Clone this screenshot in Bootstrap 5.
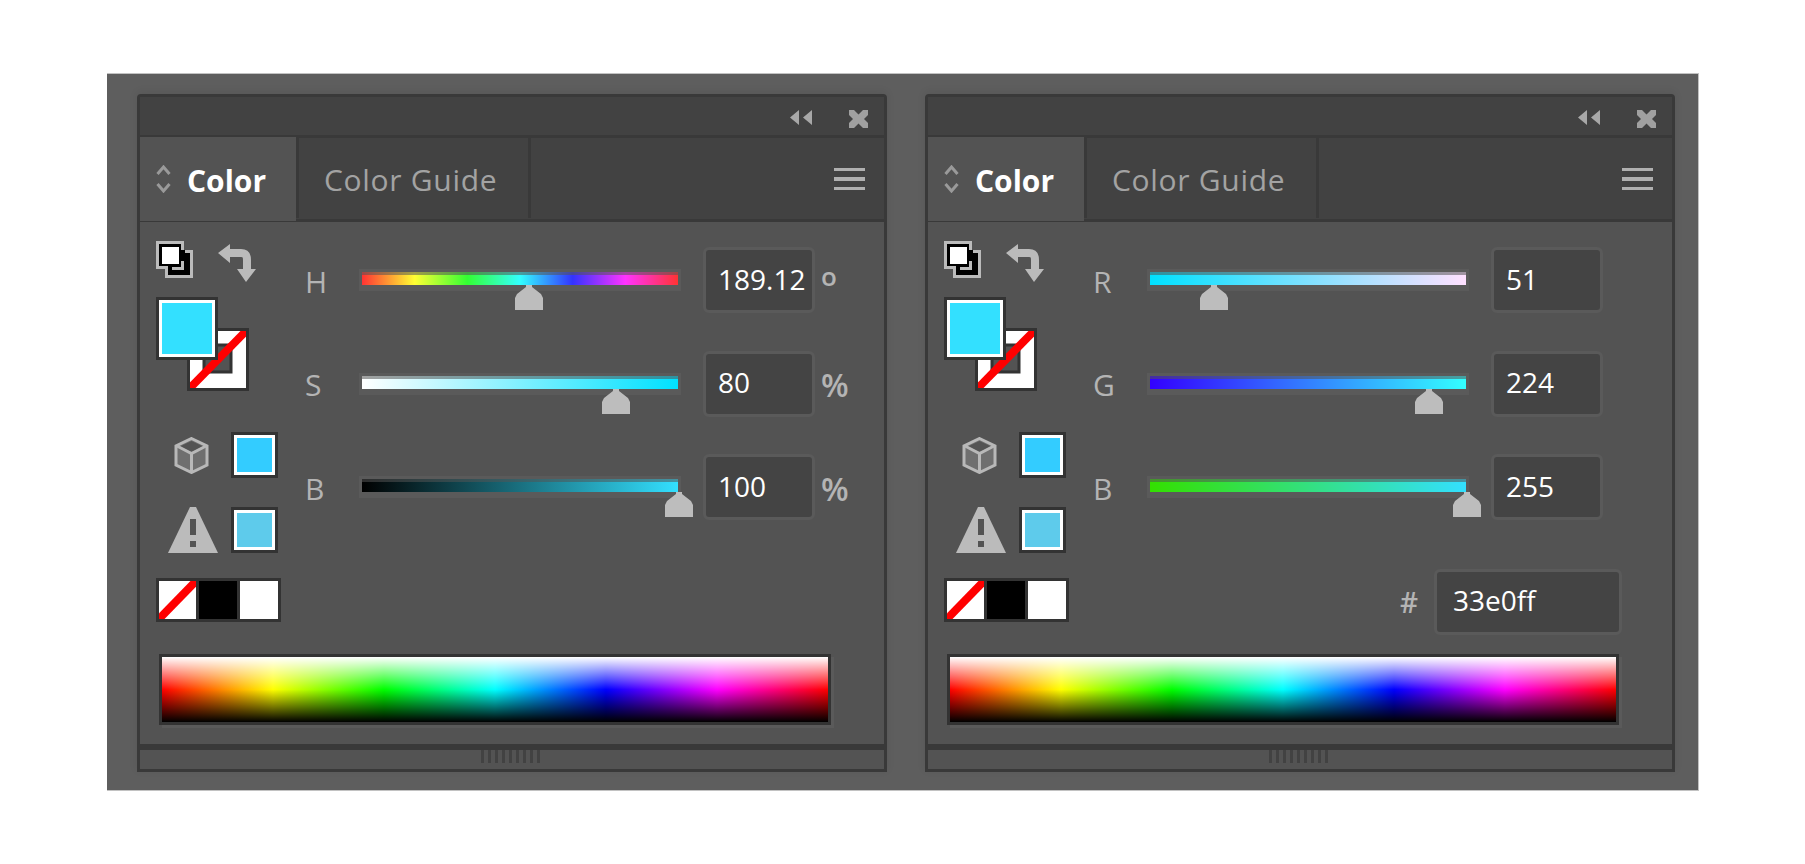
<!DOCTYPE html>
<html lang="en">
<head>
    <meta charset="UTF-8">
    <meta name="viewport" content="width=device-width, initial-scale=1.0">
    <title>Color panels</title>
    <link href="https://cdn.jsdelivr.net/npm/bootstrap@5.3.0/dist/css/bootstrap.min.css" rel="stylesheet">
    <style>
        body { background: #fff; font-family: "Open Sans", "Liberation Sans", sans-serif; }

        .frame-box {
            width: 1592px; height: 718px; margin: 73px 0 0 107px; padding: 20px 0 0 30px; gap: 38px;
            background: #5e5e5e; border: 1px solid #c2c2c2; border-left: 0;
        }
        .panel-box {
            width: 750px; height: 678px; background: #535353;
            border: 3px solid #393939; border-radius: 4px 4px 0 0;
            box-shadow: 0 -2px 8px rgba(0, 0, 0, .08);
        }

        .title-bar { height: 41px; background: #424242; border-bottom: 3px solid #393939; padding: 13px 16px 0 0; }
        .collapse-ico { margin-right: 37px; }

        .tab-bar { height: 84px; background: #424242; border-bottom: 3px solid #393939; }
        .tab-active {
            width: 156px; height: 84px; background: #535353; padding: 0 0 0 16px; gap: 16px;
            font-size: 30px; font-weight: 700; color: #fff;
        }
        .tab-active span, .tab-other span { position: relative; top: 2px; }
        .tab-other {
            width: 235px; height: 81px; padding-left: 25px; border-left: 3px solid #393939; border-right: 3px solid #393939;
            font-size: 30px; font-weight: 500; letter-spacing: .7px; color: #a3a3a3;
        }
        .menu-ico { margin-right: 19px; }

        .panel-main { height: 522px; }
        .panel-top { height: 432px; }
        .tools-col { width: 163px; padding-left: 16px; padding-top: 19px; }
        .swap-row { height: 41px; gap: 25px; }
        .swap-ico { margin-top: 3px; }
        .swatch-pair { width: 93px; height: 94px; margin-top: 15px; }
        .fill-swatch {
            width: 62px; height: 63px; top: 0; left: 0; background: #33e0ff;
            border: 3px solid #333; box-shadow: inset 0 0 0 3px #fff;
        }
        .stroke-swatch { top: 31px; left: 31px; }
        .gamut-row { width: 122px; margin-top: 41px; gap: 22px; }
        .warn-row { width: 122px; margin-top: 29px; gap: 13px; }
        .mini-swatch { width: 47px; height: 46px; border: 3px solid #333; box-shadow: inset 0 0 0 3px #fff; }
        .mini-web { background: #33ccff; }
        .mini-warn { background: #5ecbeb; }

        .quick-bar { width: 125px; height: 44px; margin-top: 25px; padding: 3px; gap: 3px; background: #333; }
        .quick-none { width: 37px; }
        .quick-black { width: 38px; background: #000; }
        .quick-white { width: 38px; background: #fff; }

        .slider-col { padding-top: 25px; gap: 37.5px; }
        .slider-row { height: 66px; }
        .slider-label { width: 56px; padding: 3px 0 0 2px; font-size: 30px; font-weight: 500; color: #b4b4b4; line-height: 1; }
        .slider-track {
            width: 322px; height: 22px; border-style: solid; border-color: #5a5a5a; border-width: 3px 3px 6px;
            box-shadow: inset 0 3px 0 rgba(83, 83, 83, .55);
        }
        .slider-thumb { width: 28px; height: 25px; top: 100%; margin-left: -13px; }
        .value-box.form-control {
            width: 112px; height: 66px; margin-left: 22px; padding: 0 0 3px 12px;
            background: #444; border: 3px solid #5a5a5a; border-radius: 6px;
            color: #fff; font: 28px "Open Sans", "Liberation Sans", sans-serif; box-shadow: none;
        }
        .unit-text { width: 34px; margin-left: 6px; padding-top: 3px; font-size: 32px; font-weight: 600; line-height: 1; color: #b4b4b4; }
        .unit-deg { font-size: 26px; padding-top: 0; margin-top: -8px; }
        .hex-row { height: 66px; margin-top: 11px; padding-left: 309px; }
        .hex-mark { width: 34px; font-size: 28px; font-weight: 600; color: #b4b4b4; }
        .value-box.hex-box { width: 188px; margin-left: 0; padding-left: 16px; }

        .spectrum-box {
            width: 672px; height: 71px; margin-left: 19px; border: 3px solid #333;
            box-shadow: 3px 3px 0 #5a5a5a;
            background:
                linear-gradient(to bottom, #fff 0%, rgba(255, 255, 255, 0) 50%, rgba(0, 0, 0, 0) 50%, #000 100%),
                linear-gradient(to right, #f00, #ff0, #0f0, #0ff, #00f, #f0f, #f00);
        }
        .panel-foot { height: 22px; background: #535353; border-top: 6px solid #393939; }
        .grip-ico { margin-left: 341px; }
    </style>
</head>
<body>
<div class="frame-box d-flex align-items-start" id="frame"></div>

<script>
    const panels = [
        {
            sliders: [
                { label: 'H', value: '189.12', pct: 189.12 / 360, unit: 'o', grad: '#ff3333, #ffff33, #33ff33, #33ffff, #3333ff, #ff33ff, #ff3333' },
                { label: 'S', value: '80', pct: 0.8, unit: '%', grad: '#ffffff, #00e1ff' },
                { label: 'B', value: '100', pct: 1, unit: '%', grad: '#000000, #33e0ff' }
            ]
        },
        {
            hex: '33e0ff',
            sliders: [
                { label: 'R', value: '51', pct: 51 / 255, grad: '#00e0ff, #ffe0ff' },
                { label: 'G', value: '224', pct: 224 / 255, grad: '#3300ff, #33ffff' },
                { label: 'B', value: '255', pct: 1, grad: '#33e000, #33e0ff' }
            ]
        }
    ];

    const thumbSvg = `<svg width="28" height="25" viewBox="0 0 28 25" class="d-block"><path d="M11 0h6v2l9 7 2 4v12H0V13l2-4 9-7z" fill="#bdbdbd"/></svg>`;

    const topIcons = `
        <svg class="collapse-ico" width="22" height="15" viewBox="0 0 22 15"><path d="M0 7.5 9 0v15zM13 7.5 22 0v15z" fill="#a8a8a8"/></svg>
        <svg width="19" height="18" viewBox="0 0 19 18"><path d="M0 0h5l4.500 4.500L14 0h5v5l-4 4 4 4v5h-5l-4.500-4.500L5 18H0v-5l4-4-4-4z" fill="#a0a0a0"/></svg>`;

    const arrowsIcon = `<svg width="15" height="28" viewBox="0 0 15 28"><path d="M1.500 9 7.500 2l6 7M1.500 19l6 7 6-7" fill="none" stroke="#9a9a9a" stroke-width="3"/></svg>`;

    const menuIcon = `<svg class="menu-ico" width="31" height="22" viewBox="0 0 31 22" shape-rendering="crispEdges"><path d="M0 0h31v3H0zM0 9h31v4H0zM0 19h31v3H0z" fill="#b0b0b0"/></svg>`;

    const defaultIcon = `<svg width="37" height="37" viewBox="0 0 37 37" shape-rendering="crispEdges">
        <rect width="28" height="28" fill="#bbb"/><rect x="3" y="3" width="22" height="22" fill="#000"/>
        <rect x="9" y="9" width="28" height="28" fill="#bbb"/><rect x="12" y="12" width="22" height="22" fill="#000"/>
        <rect x="3" y="3" width="22" height="22" fill="#000"/><rect x="25" y="9" width="4" height="12" fill="#000"/>
        <rect x="6" y="6" width="17" height="17" fill="#fff"/><path d="M25 20h3v9H16v-3h9z" fill="#bbb"/></svg>`;

    const swapIcon = `<svg class="swap-ico" width="38" height="38" viewBox="0 0 38 38">
        <path d="M8 9h15q6 0 6 7v11" fill="none" stroke="#bbb" stroke-width="8"/>
        <path d="M0 9 12 0v19zM19 25h19L28 38z" fill="#bbb"/></svg>`;

    const strokeSwatch = `<svg class="stroke-swatch position-absolute" width="62" height="63" viewBox="0 0 62 63">
        <rect width="62" height="63" fill="#fff"/>
        <rect x="17" y="17" width="27" height="27" fill="#535353" stroke="#333" stroke-width="3"/>
        <path d="M3 60 59 3" stroke="#f00" stroke-width="8"/>
        <rect x="1.500" y="1.500" width="59" height="60" fill="none" stroke="#333" stroke-width="3"/></svg>`;

    const cubeIcon = `<svg width="35" height="37" viewBox="0 0 35 37">
        <path d="M17.500 1.500 33 9v19l-15.500 7.500L2 28V9z" fill="#6f6f6f" stroke="#b8b8b8" stroke-width="3"/>
        <path d="M17.500 4 29 9.500 17.500 15 6 9.500z" fill="#535353"/>
        <path d="M3 9l14.500 7.500L32 9M17.500 16.500V35" fill="none" stroke="#b8b8b8" stroke-width="3"/></svg>`;

    const warnIcon = `<svg width="50" height="46" viewBox="0 0 50 46">
        <path d="M22 0h6l22 46H0z" fill="#bbb"/>
        <path d="M22 12h6v16h-6zM22 34h6v6h-6z" fill="#535353"/></svg>`;

    const noneSlash = `<svg class="quick-none d-block" width="37" height="38" viewBox="0 0 37 38">
        <rect width="37" height="38" fill="#fff"/><path d="M-1 39 38-1" stroke="#f00" stroke-width="8"/></svg>`;

    const grip = `<svg class="grip-ico d-block" width="59" height="13" viewBox="0 0 59 13" shape-rendering="crispEdges">
        ${[...Array(9).keys()].map(i => `<rect x="${i * 7}" width="3" height="13" fill="#424242"/>`).join('')}</svg>`;

    function sliderRow(s) {
        // thumb place comes from the value
        return `
        <div class="slider-row d-flex align-items-center">
            <span class="slider-label">${s.label}</span>
            <div class="slider-track position-relative" style="background: linear-gradient(to right, ${s.grad})">
                <div class="slider-thumb position-absolute" style="left: ${(s.pct * 100).toFixed(2)}%">${thumbSvg}</div>
            </div>
            <input class="value-box form-control" value="${s.value}">
            ${s.unit ? `<span class="unit-text ${s.unit === 'o' ? 'unit-deg' : ''}">${s.unit}</span>` : ''}
        </div>`;
    }

    function panelHtml(p) {
        return `
        <div class="panel-box d-flex flex-column flex-shrink-0">
            <div class="title-bar d-flex justify-content-end align-items-start">${topIcons}</div>
            <div class="tab-bar d-flex justify-content-between align-items-center">
                <div class="d-flex align-items-start">
                    <div class="tab-active d-flex align-items-center">${arrowsIcon}<span>Color</span></div>
                    <div class="tab-other d-flex align-items-center"><span>Color Guide</span></div>
                </div>
                ${menuIcon}
            </div>
            <div class="panel-main">
                <div class="panel-top d-flex">
                    <div class="tools-col flex-shrink-0">
                        <div class="swap-row d-flex align-items-start">${defaultIcon}${swapIcon}</div>
                        <div class="swatch-pair position-relative">
                            ${strokeSwatch}
                            <div class="fill-swatch position-absolute"></div>
                        </div>
                        <div class="gamut-row d-flex justify-content-end align-items-center">${cubeIcon}<div class="mini-swatch mini-web"></div></div>
                        <div class="warn-row d-flex justify-content-end align-items-end">${warnIcon}<div class="mini-swatch mini-warn"></div></div>
                        <div class="quick-bar d-flex">${noneSlash}<div class="quick-black"></div><div class="quick-white"></div></div>
                    </div>
                    <div class="slider-col d-flex flex-column flex-grow-1">
                        ${p.sliders.map(sliderRow).join('')}
                        ${p.hex ? `<div class="hex-row d-flex align-items-center"><span class="hex-mark">#</span><input class="value-box hex-box form-control" value="${p.hex}"></div>` : ''}
                    </div>
                </div>
                <div class="spectrum-box"></div>
            </div>
            <div class="panel-foot">${grip}</div>
        </div>`;
    }

    document.getElementById('frame').innerHTML = panels.map(panelHtml).join('');
</script>
<script src="https://cdn.jsdelivr.net/npm/bootstrap@5.3.0/dist/js/bootstrap.bundle.min.js"></script>
</body>
</html>
